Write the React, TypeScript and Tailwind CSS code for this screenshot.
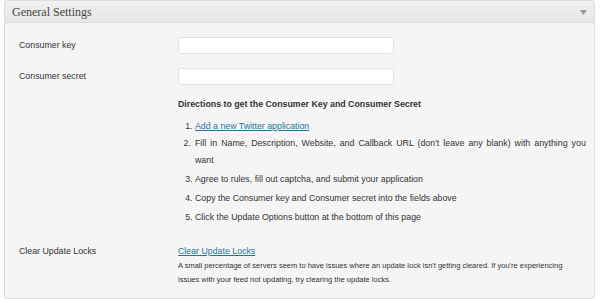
import React from "react";

const sans = { fontFamily: '"Liberation Sans", Arial, sans-serif' };

export default function App() {
  return (
    <div className="w-[600px] h-[300px] bg-white overflow-hidden" style={sans}>
      <div className="ml-[4px] w-[591px] h-[299px] border border-[#dcdcdc] rounded-[3px] bg-[#f5f5f5] flex flex-col overflow-hidden">
        <div className="h-[22px] shrink-0 flex items-center justify-between pl-[7px] pr-[7px] bg-gradient-to-b from-[#f0f0f0] to-[#e6e6e6] border-b border-[#dadada]">
          <span
            className="text-[12px] text-[#464646] leading-none"
            style={{ fontFamily: '"Liberation Serif", "Times New Roman", serif' }}
          >
            General Settings
          </span>
          <svg width="7" height="5" viewBox="0 0 7 5" className="mt-[1px]">
            <path d="M0 0 H7 L3.5 5 Z" fill="#9a9a9a" />
          </svg>
        </div>
        <div className="flex-1 pt-[14px] pl-[14px] pr-[4px] text-[8.8px] text-[#333]">
          <div className="flex items-center h-[17px] mb-[14px]">
            <div className="w-[159px]">Consumer key</div>
            <div className="w-[216px] h-[17px] bg-white border border-[#e2e2e2] rounded-[3px]" />
          </div>
          <div className="flex items-center h-[17px]">
            <div className="w-[159px]">Consumer secret</div>
            <div className="w-[216px] h-[17px] bg-white border border-[#e2e2e2] rounded-[3px]" />
          </div>
          <div className="ml-[159px] mt-[11px]">
            <div className="font-bold leading-[16px]">Directions to get the Consumer Key and Consumer Secret</div>
            <ol className="list-decimal pl-[17px] mt-[6px] leading-[16px]">
              <li className="mb-[1px]">
                <a className="text-[#21759b] underline">Add a new Twitter application</a>
              </li>
              <li className="mb-[2px] max-w-[392px] leading-[17px] [word-spacing:1.6px]">
                Fill in Name, Description, Website, and Callback URL (don't leave any blank) with anything you want
              </li>
              <li className="mb-[3px]">Agree to rules, fill out captcha, and submit your application</li>
              <li className="mb-[3px]">Copy the Consumer key and Consumer secret into the fields above</li>
              <li>Click the Update Options button at the bottom of this page</li>
            </ol>
          </div>
          <div className="flex mt-[18px]">
            <div className="w-[159px] leading-[16px]">Clear Update Locks</div>
            <div>
              <a className="text-[#21759b] underline leading-[16px] block">Clear Update Locks</a>
              <p className="text-[7.5px] leading-[14px] w-[400px]">
                A small percentage of servers seem to have issues where an update lock isn't getting cleared. If you're experiencing issues with your feed not updating, try clearing the update locks.
              </p>
            </div>
          </div>
        </div>
      </div>
    </div>
  );
}
